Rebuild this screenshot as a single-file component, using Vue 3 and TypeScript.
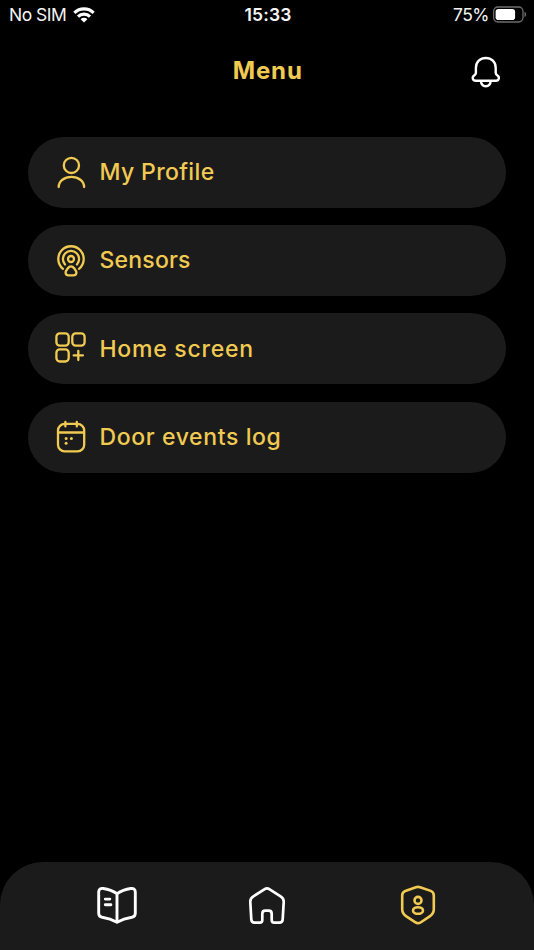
<script setup lang="ts">
type IconName = 'profile' | 'sensors' | 'widgets' | 'calendar'

interface MenuItem {
  label: string
  icon: IconName
}

const items: MenuItem[] = [
  { label: 'My Profile', icon: 'profile' },
  { label: 'Sensors', icon: 'sensors' },
  { label: 'Home screen', icon: 'widgets' },
  { label: 'Door events log', icon: 'calendar' },
]
</script>

<template>
  <div class="screen">
    <div class="status">
      <div class="carrier">
        <span>No SIM</span>
        <svg class="wifi" width="22" height="16" viewBox="0 0 22 16" fill="none" stroke="#fff" stroke-width="3.2">
          <path d="M1.4 5.8a13.7 13.7 0 0 1 19.2 0" />
          <path d="M5 9.6a8.5 8.5 0 0 1 12 0" />
          <path d="M11 15.6 7.6 12.2a4.8 4.8 0 0 1 6.8 0Z" fill="#fff" stroke="none" />
        </svg>
      </div>
      <div class="clock">15:33</div>
      <div class="power">
        <span>75%</span>
        <svg width="35" height="18" viewBox="0 0 35 18">
          <rect x="1.6" y="1" width="29.4" height="15" rx="4.4" fill="none" stroke="#6d6d6d" stroke-width="1.3" />
          <rect x="3.6" y="3" width="19.5" height="11" rx="2.8" fill="#fff" />
          <path d="M32.500 5.700c2.200.8 2.200 4.600 0 5.400Z" fill="#6d6d6d" />
        </svg>
      </div>
    </div>

    <header class="header">
      <h1>Menu</h1>
      <button class="bell" aria-label="Notifications">
        <svg width="30" height="32" viewBox="0 0 30 32" fill="none" stroke="#fff" stroke-width="2.4" stroke-linecap="round" stroke-linejoin="round">
          <path d="M4.900 11.700C4.900 5.800 9.200 2 14.800 2s9.900 3.800 9.900 9.700v5.100c0 1.200.4 1.800 1.500 2.500 2.700 1.800 2 5.400-1.500 5.400H4.900c-3.500 0-4.200-3.600-1.500-5.400 1.100-.7 1.500-1.300 1.500-2.500Z" />
          <path d="M9.900 25.200c.3 3.300 2.200 5 4.900 5s4.600-1.700 4.900-5" />
        </svg>
      </button>
    </header>

    <main class="menu">
      <button v-for="item in items" :key="item.icon" class="item">
        <svg class="icon" viewBox="0 0 32 32" fill="none" stroke="currentColor" stroke-width="2.3" stroke-linecap="round" stroke-linejoin="round">
          <g v-if="item.icon === 'profile'">
            <circle cx="16.400" cy="9.400" r="7.600" />
            <path d="M3.700 31c0-5.900 5.600-10.100 12.700-10.100S29.100 25.100 29.100 31" />
          </g>
          <g v-else-if="item.icon === 'sensors'">
            <circle cx="16" cy="15" r="3" />
            <path d="M10 20.500a8.100 8.100 0 1 1 12 0" />
            <path d="M8 24.800a12.700 12.700 0 1 1 16 0" />
            <path d="M16 22.300c1.500 0 2.300.8 3.200 2 1 1.400 2.200 2.500 2.200 4.100 0 1.900-1.400 2.900-3 2.900h-4.800c-1.600 0-3-1-3-2.900 0-1.600 1.200-2.700 2.200-4.100.9-1.200 1.700-2 3.200-2Z" />
          </g>
          <g v-else-if="item.icon === 'widgets'">
            <rect x="1.400" y=".400" width="12.300" height="12.200" rx="3.400" />
            <rect x="17.300" y=".400" width="12.300" height="12.200" rx="3.400" />
            <rect x="1.400" y="16.300" width="12.300" height="12.200" rx="3.400" />
            <path d="M23.300 17.800v9.200M18.700 22.400h9.200" />
          </g>
          <g v-else>
            <rect x="3" y="2.900" width="26.200" height="27.500" rx="6.700" />
            <path d="M3.200 11.500h25.800M10.400 1v4.400M21.800 1v4.400" />
            <g fill="currentColor" stroke="none">
              <circle cx="11.100" cy="17.500" r="1.500" />
              <circle cx="16.400" cy="17.500" r="1.500" />
              <circle cx="11.100" cy="22.300" r="1.500" />
            </g>
          </g>
        </svg>
        <span class="label" :class="item.icon">{{ item.label }}</span>
      </button>
    </main>

    <nav class="tabs">
      <button aria-label="Guide">
        <svg width="42" height="42" viewBox="0 0 42 42" fill="none" stroke="#fff" stroke-width="2.900" stroke-linecap="round" stroke-linejoin="round">
          <path d="M21 9.800c-4-2.800-8.500-4.500-13.800-5.300C4.300 4.100 2.700 5.400 2.700 8v21.200c0 2.400 1 3.600 3.400 4 5.700.8 10.600 2.500 14.900 5 4.300-2.500 9.200-4.200 14.900-5 2.400-.4 3.400-1.600 3.400-4V8c0-2.600-1.600-3.900-4.500-3.500C29.500 5.300 25 7 21 9.800ZM21 10v28" />
          <path d="M9.300 15.100h4.500M9.300 20.700h5.600" />
        </svg>
      </button>
      <button aria-label="Home">
        <svg width="42" height="42" viewBox="0 0 42 42" fill="none" stroke="#fff" stroke-width="2.700" stroke-linecap="round" stroke-linejoin="round">
          <path d="M18.700 5.100 7.400 12.300c-2.400 1.500-3.300 2.900-3.100 5.800l1 17.300c.1 2.300 1.200 3.200 3.300 3.200h5.200c1.700 0 2.500-.9 2.500-2.600v-6.300c0-2 1-3 3-3h3.400c2 0 3 1 3 3V36c0 1.700.8 2.600 2.500 2.600h5.200c2.100 0 3.200-.9 3.300-3.200l1-17.300c.2-2.900-.7-4.300-3.100-5.800L23.300 5.100c-1.700-1.100-2.900-1.100-4.600 0Z" />
        </svg>
      </button>
      <button class="active" aria-label="Menu">
        <svg width="42" height="42" viewBox="0 0 42 42" fill="none" stroke="currentColor" stroke-width="2.600" stroke-linecap="round" stroke-linejoin="round">
          <path d="m18.900 3.200-10.600 3.700c-2.200.8-3.100 2.200-3.100 4.500v13.900c0 3.100 1.200 5.100 4.100 7l8.800 5.900c2 1.400 3.800 1.400 5.800 0l8.800-5.900c2.900-1.900 4.100-3.900 4.100-7V11.400c0-2.300-.9-3.700-3.100-4.500L23.100 3.200c-1.500-.5-2.700-.5-4.200 0Z" />
          <circle cx="21" cy="16.400" r="3.500" />
          <ellipse cx="21" cy="26.500" rx="5" ry="3.300" />
        </svg>
      </button>
    </nav>
  </div>
</template>

<style>
body {
  background: #000;
}
</style>

<style scoped>
.screen {
  display: flex;
  flex-direction: column;
  width: 534px;
  height: 950px;
  overflow: hidden;
  background: #000;
  color: #f1ca52;
  font-family: Inter, "Liberation Sans", sans-serif;
}

button {
  margin: 0;
  padding: 0;
  border: 0;
  background: none;
  color: inherit;
  font: inherit;
}

svg {
  display: block;
  flex: none;
  overflow: visible;
}

.status {
  display: grid;
  grid-template-columns: 1fr auto 1fr;
  align-items: center;
  height: 29px;
  padding: 0 7px 0 9px;
  color: #f4f4f4;
  font-size: 17.500px;
  line-height: 29px;
}

.carrier,
.power {
  display: flex;
  align-items: center;
}

.carrier {
  gap: 7px;
  letter-spacing: -0.500px;
}

.clock {
  font-weight: 600;
  letter-spacing: 0.100px;
}

.power {
  justify-content: flex-end;
  gap: 3px;
  letter-spacing: -0.500px;
}

.header {
  display: grid;
  grid-template-columns: 1fr auto 1fr;
  align-items: center;
  height: 84px;
  padding: 0 33.300px 0 34.700px;
}

h1 {
  grid-column: 2;
  margin: 0;
  font-size: 24px;
  font-weight: 650;
  line-height: 84px;
  letter-spacing: 0.900px;
}

.bell {
  justify-self: end;
  padding-top: 2px;
}

.menu {
  display: flex;
  flex: 1;
  flex-direction: column;
  gap: 17.300px;
  padding: 23.700px 28.300px 0;
}

.item {
  display: flex;
  align-items: center;
  gap: 12.500px;
  height: 71px;
  padding-left: 26.700px;
  border-radius: 35.500px;
  background: #1b1b1b;
  text-align: left;
}

.icon {
  width: 32px;
  height: 32px;
}

.label {
  font-size: 23px;
  font-weight: 500;
  line-height: 32px;
  white-space: nowrap;
}

.label.profile {
  letter-spacing: 0.350px;
}

.label.sensors {
  letter-spacing: 0.200px;
}

.label.widgets {
  letter-spacing: 0.750px;
}

.label.calendar {
  letter-spacing: 0.620px;
}

.tabs {
  display: grid;
  grid-template-columns: repeat(3, 150.500px);
  justify-content: center;
  justify-items: center;
  height: 66.300px;
  padding-top: 22.200px;
  border-radius: 43px 43px 0 0;
  background: #1b1b1b;
}

.tabs button {
  height: 42px;
}
</style>
